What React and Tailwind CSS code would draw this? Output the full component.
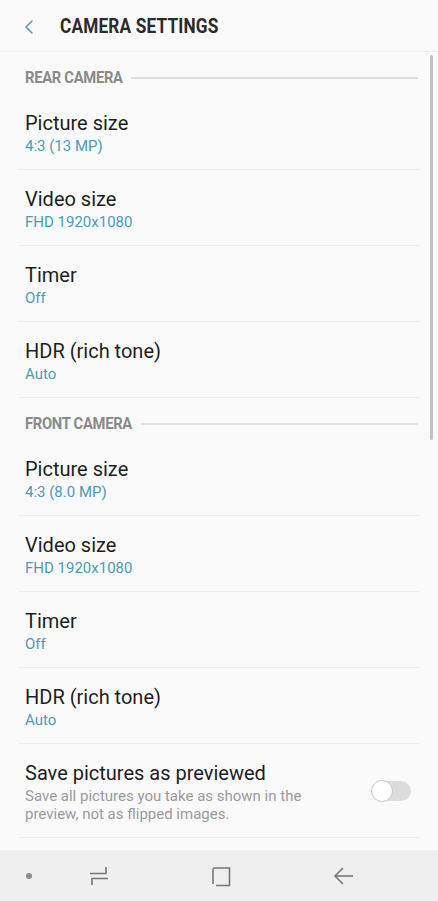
import { ChevronLeft } from 'lucide-react';

const rear = [
  { title: 'Picture size', value: '4:3 (13 MP)' },
  { title: 'Video size', value: 'FHD 1920x1080' },
  { title: 'Timer', value: 'Off' },
  { title: 'HDR (rich tone)', value: 'Auto' },
];

const front = [
  { title: 'Picture size', value: '4:3 (8.0 MP)' },
  { title: 'Video size', value: 'FHD 1920x1080' },
  { title: 'Timer', value: 'Off' },
  { title: 'HDR (rich tone)', value: 'Auto' },
];

function SectionHeader({ label }) {
  return (
    <div className="flex items-center h-[42px] pl-[25px] pr-[20px] pt-[10px]">
      <span className="text-[16px] font-bold text-[#8a8a8a] tracking-[-0.3px] scale-x-[0.92] origin-left whitespace-nowrap">
        {label}
      </span>
      <div className="flex-1 h-[2px] bg-[#dedede]" />
    </div>
  );
}

function SettingRow({ title, value }) {
  return (
    <div className="h-[76px] mx-[18px] px-[7px] pt-[16px] border-b border-[#ececec]">
      <div className="text-[20px] leading-[26px] text-[#1e1e1e]">{title}</div>
      <div className="text-[15px] leading-[21px] text-[#4b9bb3]">{value}</div>
    </div>
  );
}

export default function App() {
  return (
    <div className="w-[438px] h-[901px] bg-[#fafafa] flex flex-col overflow-hidden" style={{ fontFamily: 'Roboto, "Noto Sans", sans-serif' }}>
      {/* app bar */}
      <div className="h-[52px] flex items-center border-b border-[#eeeeee] shrink-0 pt-[2px]">
        <ChevronLeft size={24} strokeWidth={1.5} className="ml-[17px] text-[#4b9bb3]" />
        <span className="ml-[19px] text-[21px] font-bold text-[#2b2b2b] scale-x-[0.82] origin-left whitespace-nowrap tracking-[0.2px]">
          CAMERA SETTINGS
        </span>
      </div>

      <div className="relative flex-1 overflow-hidden">
        <div className="absolute right-[5px] top-[3px] w-[3px] h-[385px] bg-[#c2c2c2] rounded-full" />
        <SectionHeader label="REAR CAMERA" />
        {rear.map((r, i) => (
          <SettingRow key={'r' + i} {...r} />
        ))}
        <SectionHeader label="FRONT CAMERA" />
        {front.map((r, i) => (
          <SettingRow key={'f' + i} {...r} />
        ))}
        <div className="h-[94px] mx-[18px] px-[7px] pt-[16px] border-b border-[#ececec] flex">
          <div className="flex-1">
            <div className="text-[20px] leading-[26px] text-[#1e1e1e]">Save pictures as previewed</div>
            <div className="text-[15px] leading-[18px] text-[#9a9a9a] mt-[1px] pr-[30px]">
              Save all pictures you take as shown in the preview, not as flipped images.
            </div>
          </div>
          <div className="relative w-[40px] h-[22px] mt-[20px] mr-[2px]">
            <div className="absolute inset-y-[1px] left-[6px] right-0 rounded-full bg-[#dcdcdc]" />
            <div className="absolute left-0 top-0 w-[22px] h-[22px] rounded-full bg-white border-[1.5px] border-[#c8c8c8]" />
          </div>
        </div>
      </div>

      {/* nav bar */}
      <div className="h-[51px] bg-[#efefef] flex items-center shrink-0 relative">
        <div className="absolute left-[26px] top-[23px] w-[6px] h-[6px] rounded-full bg-[#8c8c8c]" />
        <svg className="absolute left-[88px] top-[16px]" width="22" height="20" viewBox="0 0 22 20" fill="none" stroke="#777" strokeWidth="1.6">
          <path d="M18 1 V7.5 H2" />
          <path d="M4 19 V12.5 H20" />
        </svg>
        <svg className="absolute left-[210px] top-[16px]" width="22" height="22" viewBox="0 0 22 22" fill="none" stroke="#777" strokeWidth="1.6">
          <path d="M3 18 V3.5 Q3 2 4.5 2 H19.5 V19.5 H6" />
        </svg>
        <svg className="absolute left-[333px] top-[16px]" width="22" height="20" viewBox="0 0 22 20" fill="none" stroke="#777" strokeWidth="1.6">
          <path d="M20 10 H3" />
          <path d="M10 2 L2 10 L10 18" />
        </svg>
      </div>
    </div>
  );
}
